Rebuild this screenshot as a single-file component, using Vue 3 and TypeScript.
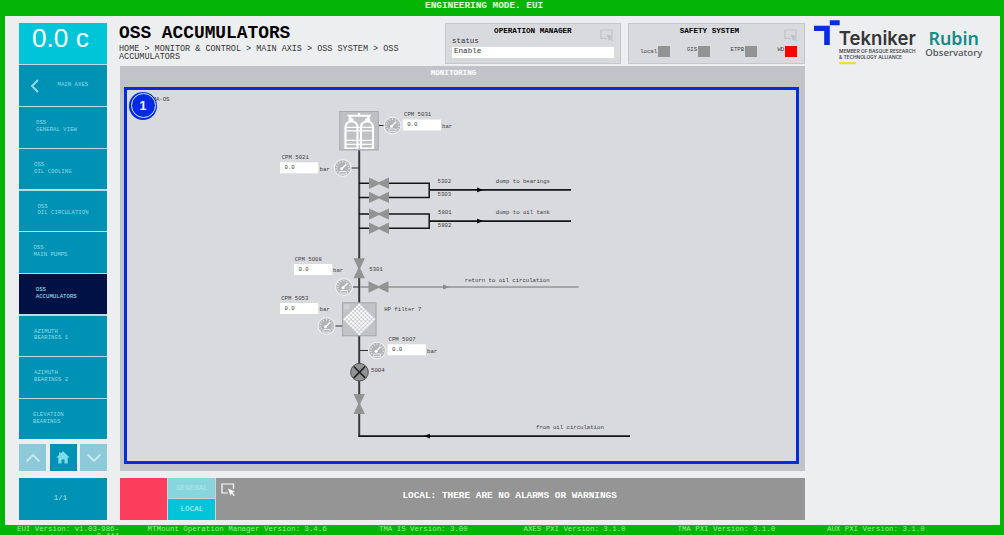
<script setup lang="ts">
interface NavItem { lines: string[]; indent: number; active?: boolean }
interface Sensor { name: string; x: number; y: number; lx: number; ly: number; gx: number; gy: number; bx: number }

const nav: NavItem[] = [
  { lines: ['OSS', 'GENERAL VIEW'], indent: 17 },
  { lines: ['OSS', 'OIL COOLING'], indent: 15 },
  { lines: ['OSS', 'OIL CIRCULATION'], indent: 18.4 },
  { lines: ['OSS', 'MAIN PUMPS'], indent: 14.4 },
  { lines: ['OSS', 'ACCUMULATORS'], indent: 16.8, active: true },
  { lines: ['AZIMUTH', 'BEARINGS 1'], indent: 15 },
  { lines: ['AZIMUTH', 'BEARINGS 2'], indent: 15 },
  { lines: ['ELEVATION', 'BEARINGS'], indent: 14 },
]

const sensors: Sensor[] = [
  { name: 'CPM 5031', x: 402.7, y: 119.5, lx: 404, ly: 116, gx: 392.5, gy: 125.5, bx: 442 },
  { name: 'CPM 5021', x: 280, y: 162.3, lx: 281.7, ly: 158.7, gx: 342.7, gy: 168, bx: 319.5 },
  { name: 'CPM 5008', x: 294, y: 264, lx: 294.7, ly: 260.6, gx: 344, gy: 287, bx: 333 },
  { name: 'CPM 5053', x: 280, y: 303, lx: 281.2, ly: 299.6, gx: 326.5, gy: 326, bx: 319.5 },
  { name: 'CPM 5007', x: 387.5, y: 344.3, lx: 388.5, ly: 341, gx: 377, gy: 350.5, bx: 427 },
]

const labels = [
  { t: '5302', x: 437.6, y: 183.4 },
  { t: '5303', x: 437.6, y: 196.4 },
  { t: '5801', x: 438, y: 214.3 },
  { t: '5802', x: 437.8, y: 227.3 },
  { t: 'dump to bearings', x: 495.8, y: 183.4 },
  { t: 'dump to oil tank', x: 495.8, y: 214.3 },
  { t: '5301', x: 369.3, y: 270.7 },
  { t: 'return to oil circulation', x: 464.8, y: 282 },
  { t: 'HP filter 7', x: 384.2, y: 310.8 },
  { t: '5004', x: 371, y: 371.7 },
  { t: 'from oil circulation', x: 536, y: 429 },
]

const valves = [
  { x: 379, y: 183.2, r: 0 },
  { x: 379, y: 197.4, r: 0 },
  { x: 379, y: 214.1, r: 0 },
  { x: 379, y: 228.3, r: 0 },
  { x: 378.5, y: 287, r: 0 },
  { x: 359.2, y: 268.2, r: 90 },
  { x: 359.2, y: 404, r: 90 },
]

const ticks = [-120, -97, -74, -51, -28, 0, 28, 51, 74, 97, 120]

const dots: { x: number; y: number }[] = []
for (let r = 0; r < 15; r++) {
  const n = 7 - Math.abs(7 - r)
  for (let c = 0; c <= n; c++) dots.push({ x: 359.3 + (c - n / 2) * 4.1, y: 305 + r * 2.05 })
}

const versions = [
  { t: 'MTMount Operation Manager Version: 3.4.6', c: 'v-mount' },
  { t: 'TMA IS Version: 3.00', c: 'v-is' },
  { t: 'AXES PXI Version: 3.1.0', c: 'v-axes' },
  { t: 'TMA PXI Version: 3.1.0', c: 'v-tma' },
  { t: 'AUX PXI Version: 3.1.0', c: 'v-aux' },
]
</script>

<template>
  <div class="app">
    <header class="mode">ENGINEERING MODE. EUI</header>
    <div class="body">
      <aside class="side">
        <div class="temp">0.0 c</div>
        <nav class="menu">
          <div class="item back">
            <svg width="10" height="14" viewBox="0 0 10 14"><path d="M8 1 2 7l6 6" fill="none" stroke="#8fdce8" stroke-width="1.9" /></svg>
            <span>MAIN AXES</span>
          </div>
          <div v-for="(n, i) in nav" :key="i" class="item" :class="{ active: n.active }" :style="{ paddingLeft: n.indent + 'px' }">
            <div><div v-for="l in n.lines" :key="l">{{ l }}</div></div>
          </div>
        </nav>
        <div class="pager">
          <div class="pg dim"><svg width="16" height="10" viewBox="0 0 16 10"><path d="M1.5 8.5 8 2l6.500 6.500" fill="none" stroke="#c9e9ef" stroke-width="1.8" /></svg></div>
          <div class="pg"><svg width="14" height="13" viewBox="0 0 14 13"><path d="M7 .3 13.700 6.500h-2v6H8.500V8.500h-3v4H2.300v-6h-2L3 4V1.500h1.500v1.100z" fill="#7cdcea" /></svg></div>
          <div class="pg dim"><svg width="16" height="10" viewBox="0 0 16 10"><path d="M1.500 1.500 8 8l6.500-6.500" fill="none" stroke="#c9e9ef" stroke-width="1.800" /></svg></div>
        </div>
        <div class="count">1/1</div>
      </aside>

      <main class="main">
        <div class="head">
          <div class="titles">
            <h1>OSS ACCUMULATORS</h1>
            <p>HOME &gt; MONITOR &amp; CONTROL &gt; MAIN AXIS &gt; OSS SYSTEM &gt; OSS ACCUMULATORS</p>
          </div>
          <section class="card manager">
            <h2>OPERATION MANAGER</h2>
            <label>status</label>
            <div class="input">Enable</div>
            <svg class="pick" width="14" height="13" viewBox="0 0 14 13"><path d="M7 9.500H1v-8.500h11v6" fill="none" stroke="#c0c1c5" stroke-width="1.200" /><path d="M6.500 5 13.500 8l-2.500 1 2.200 2.500-1 1L10 10 9 12z" fill="#c0c1c5" /></svg>
          </section>
          <section class="card safety">
            <h2>SAFETY SYSTEM</h2>
            <div class="leds">
              <div class="led first"><span>local</span><i></i></div>
              <div class="led narrow"><span>GIS</span><i></i></div>
              <div class="led"><span>ETPB</span><i></i></div>
              <div class="led narrow"><span>WD</span><i class="red"></i></div>
            </div>
            <svg class="pick" width="14" height="13" viewBox="0 0 14 13"><path d="M7 9.500H1v-8.500h11v6" fill="none" stroke="#c0c1c5" stroke-width="1.200" /><path d="M6.500 5 13.500 8l-2.500 1 2.200 2.500-1 1L10 10 9 12z" fill="#c0c1c5" /></svg>
          </section>
        </div>

        <section class="monitor">
          <h3>MONITORING</h3>
          <div class="frame">
            <svg class="diagram" width="669" height="371" viewBox="127 90 669 371">
              <text x="149.300" y="101.300" textLength="20.200">TMA-OS</text>

              <g fill="none" stroke="#303134" stroke-width="2">
                <path d="M359.200 150v153M359.200 335v101" stroke="#38393c" />
                <path d="M359 183.200h70.200v14.200H359M359 214.100h70.200v14.200H359" stroke-width="1.500" stroke="#141517" />
                <path d="M429.200 189.900H571M429.200 221.100H571M358.300 436.100H630" stroke-width="1.600" stroke="#141517" />
                <path d="M379 125.500h5M351 168h8M352 287h7M335 326h7.500M360 350.500h8" stroke-width="1.200" />
                <path d="M360 287h218.700" stroke="#929395" stroke-width="1.300" />
              </g>
              <path d="M477 187.500l6.500 2.400-6.500 2.400zM477 218.700l6.500 2.400-6.500 2.400zM430 433.700l-6.500 2.400 6.500 2.400z" fill="#090a0b" />
              <path d="M443 284.600l6.500 2.400-6.500 2.400z" fill="#8c8d8f" />

              <g v-for="(v, i) in valves" :key="i" :transform="`translate(${v.x} ${v.y}) rotate(${v.r})`">
                <rect x="-9" y="-2" width="18" height="4" fill="#d9dade" />
                <path d="M-10-5.700 0-1 10-5.700V5.700L0 1-10 5.700z" fill="#929393" />
              </g>

              <g>
                <rect x="339.700" y="111.500" width="38.600" height="38.500" fill="#bfc0c4" stroke="#a8a9ad" />
                <g fill="none" stroke="#fff" stroke-width="2.100">
                  <path d="M350.500 119.500v-1.500l-1.500-2.200h20.500l-1.500 2.200v1.500M359 113v3" />
                  <path d="M345.500 149v-21.500q.3-5.700 6-6.200 5.700.5 6 6.200V149M361 149v-21.500q.3-5.700 6-6.200 5.700.5 6 6.200V149" />
                  <path d="M345 127.300h28M345 130.800h28M345 140.300h28M345 144.300h28" stroke-width="1.300" />
                  <path d="M345.500 148.200h12M361 148.200h12" stroke-width="1.600" />
                </g>
                <path d="M348.500 118.500h5v3h-5zM365 118.500h5v3h-5z" fill="#fff" />
              </g>

              <rect x="342.500" y="302.800" width="33.500" height="33" fill="#c2c3c7" stroke="#a5a6aa" />
              <rect x="344" y="304.300" width="5.500" height="5" fill="#cfd0d3" />
              <circle v-for="(d, i) in dots" :key="'d' + i" :cx="d.x" :cy="d.y" r="1.250" fill="#fff" />

              <circle cx="359.500" cy="372.200" r="8.800" fill="#929393" stroke="#515254" />
              <path d="M353.800 366.500l11.400 11.400M365.200 366.500l-11.400 11.400" stroke="#242528" stroke-width="1.700" />

              <g v-for="s in sensors" :key="s.name">
                <g :transform="`translate(${s.gx} ${s.gy})`">
                  <circle r="8.400" fill="#b2b3b5" stroke="#f1f1f2" stroke-width="1.100" />
                  <path v-for="t in ticks" :key="t" d="M0-7.200V-5.400" stroke="#f4f4f5" stroke-width=".8" :transform="`rotate(${t})`" />
                  <path d="M-1.500 1.500 3.500-3.700" stroke="#fff" stroke-width="1.300" />
                  <circle cx="-1" cy=".8" r="1.500" fill="#fff" />
                  <rect x="-3.700" y="3.500" width="7.400" height="2.700" rx=".8" fill="#b7b8ba" stroke="#f4f4f5" stroke-width=".9" />
                </g>
                <text :x="s.lx" :y="s.ly" textLength="27.200">{{ s.name }}</text>
                <rect :x="s.x" :y="s.y" width="38.300" height="11" fill="#fff" />
                <text :x="s.x + 4.500" :y="s.y + 6.500" textLength="10.200">0.0</text>
                <text :x="s.bx" :y="s.y + 8.300" textLength="10.200">bar</text>
              </g>
              <text v-for="l in labels" :key="l.t" :x="l.x" :y="l.y" :textLength="l.t.length * 3.390">{{ l.t }}</text>
            </svg>
            <div class="badge"><span>1</span></div>
          </div>
        </section>

        <section class="alarm">
          <div class="state"></div>
          <div class="tabs"><div class="tab off">GENERAL</div><div class="tab">LOCAL</div></div>
          <div class="message">
            <svg width="15" height="14" viewBox="0 0 15 14"><path d="M7 10H1V1h11.500v5" fill="none" stroke="#fff" stroke-width="1.200" /><path d="M7 5.500 14 8.500l-2.500 1 2.300 2.500-1 1L10.500 10.500 9.500 12.800z" fill="#fff" /></svg>
            <span>LOCAL: THERE ARE NO ALARMS OR WARNINGS</span>
          </div>
        </section>
      </main>

      <div class="logos">
        <svg width="180" height="48" viewBox="812 18 180 48">
          <path d="M814 25.700h15.800v19.200h-5.600V31H814zM829.800 20.300h9.900v5h-9.900z" fill="#0a2be0" />
          <text class="tek" x="838.800" y="45" textLength="77" lengthAdjust="spacingAndGlyphs">Tekniker</text>
          <text class="member" x="839" y="53.300" textLength="76.500" lengthAdjust="spacingAndGlyphs">MEMBER OF BASQUE RESEARCH</text>
          <text class="member" x="839" y="59" textLength="63" lengthAdjust="spacingAndGlyphs">&amp; TECHNOLOGY ALLIANCE</text>
          <path d="M839.300 62h16.700v2.200h-16.700z" fill="#f7dc2b" />
          <text class="rubin" x="928.500" y="45.300" textLength="50.500" lengthAdjust="spacingAndGlyphs">Rubin</text>
          <text class="obs" x="925.300" y="56.300" textLength="57" lengthAdjust="spacingAndGlyphs">Observatory</text>
        </svg>
      </div>
    </div>
    <footer class="foot">
      <div class="eui">EUI Version: v1.03-986-<br />0.444</div>
      <div v-for="v in versions" :key="v.t" :class="v.c">{{ v.t }}</div>
    </footer>
  </div>
</template>

<style>
body { margin: 0; overflow: hidden; }
</style>

<style scoped>
.app { width: 1004px; height: 535px; box-sizing: border-box; background: #05b505; display: flex; flex-direction: column; overflow: hidden; font-family: "Liberation Mono", monospace; }
h1, h2, h3, p { margin: 0; }
.mode { height: 15.500px; flex: none; color: #e6ffe0; font-weight: 700; font-size: 9.400px; line-height: 11px; padding-left: 425px; white-space: nowrap; }
.body { height: 509.500px; flex: none; box-sizing: border-box; margin: 0 4px 0 5px; padding: 7px 0 0 14px; background: #edeef0; display: flex; }
.side { width: 88px; display: flex; flex-direction: column; }
.temp { height: 41.700px; background: #00c5d9; color: #fff; font: 26.200px/31px "Liberation Sans", sans-serif; padding-left: 13px; box-sizing: border-box; white-space: pre; }
.menu { display: flex; flex-direction: column; gap: 1.300px; padding: 1.300px 0 0; background: #b7dce6; }
.item { height: 40.400px; box-sizing: border-box; background: #0092b5; color: #8bd9e6; font-size: 5.700px; line-height: 6.700px; display: flex; align-items: center; padding-bottom: 1px; white-space: nowrap; }
.item.active { background: #001146; color: #a5e8f4; }
.back { padding: 0 0 0 11px; gap: 17.500px; }
.back span { padding-bottom: 1px; }
.pager { display: flex; justify-content: space-between; margin-top: 4.600px; }
.pg { width: 27px; height: 27.500px; background: #0092b5; display: flex; align-items: center; justify-content: center; }
.dim { background: #8ccada; }
.count { margin-top: 6.500px; height: 42px; background: #0092b5; color: #a3e3ee; font-size: 7.400px; line-height: 41px; text-align: center; padding-right: 5px; box-sizing: border-box; }
.main { width: 684.500px; margin-left: 13px; display: flex; flex-direction: column; }
.head { height: 42px; display: flex; }
.titles { width: 325px; flex: none; margin-left: -1px; }
h1 { font-size: 17.850px; line-height: 20px; height: 22px; white-space: nowrap; margin-top: .500px; }
.titles p { font-size: 8.480px; line-height: 8.500px; width: 290px; color: #333; margin-top: -.500px; }
.card { position: relative; box-sizing: border-box; border: 1px solid #c6c7cb; background: #d9dade; height: 41.500px; }
.card h2 { font-size: 7.620px; line-height: 9px; text-align: center; padding-top: 3.500px; }
.manager { width: 176px; margin-left: 1px; padding: 0 6px; }
.manager label { display: block; font-size: 7.450px; line-height: 9px; color: #333; padding-top: .500px; }
.input { background: #fff; height: 11.500px; font-size: 7.600px; line-height: 9px; color: #333; padding-left: 2px; margin-top: 1px; }
.pick { position: absolute; right: 6px; top: 5px; }
.safety { margin-left: 7.500px; width: 176.500px; }
.safety h2 { padding-right: 14px; }
.leds { display: flex; justify-content: flex-end; padding: 10px 7px 0 0; }
.led { display: flex; flex: none; width: 47px; justify-content: flex-end; font-size: 5.700px; line-height: 8.500px; color: #444; gap: 1px; }
.led.narrow { width: 40px; }
.led.first { width: auto; }
.first span { padding-top: 2px; }
.led i { width: 11.300px; height: 11.300px; background: #929393; flex: none; }
.led i.red { background: #f00; }
.monitor { margin-top: 1.300px; height: 405.700px; background: #c2c3c8; padding: 0 5.500px 0 4px; box-sizing: border-box; }
h3 { height: 21.200px; color: #fff; font-size: 7.600px; line-height: 14px; text-align: center; padding-right: 16px; box-sizing: border-box; }
.frame { position: relative; width: 675px; height: 377px; box-sizing: border-box; border: 3px solid #002be0; background: #d9dade; }
.diagram { display: block; font-size: 5.700px; }
.diagram text { fill: #3d3e41; }
.badge { position: absolute; left: 2px; top: 2px; width: 28px; height: 28px; box-sizing: border-box; border-radius: 50%; background: #002be0; padding: 1.500px; }
.badge span { display: block; height: 25px; box-sizing: border-box; border: 1.200px solid #dfe6ff; border-radius: 50%; color: #fff; font: 700 12.500px/24px "Liberation Sans", sans-serif; text-align: center; }
.alarm { margin-top: 6.500px; height: 42px; display: flex; background: #d0d1d3; }
.state { width: 47px; background: #fb3e5b; }
.tabs { width: 47.500px; margin: 0 .700px; display: flex; flex-direction: column; gap: 1px; }
.tab { height: 20.500px; background: #00c5d9; color: #c9f5f9; font-size: 7.600px; line-height: 20.500px; text-align: center; padding-left: 1px; }
.off { background: #87d6de; color: #b2e5ea; }
.message { flex: 1; background: #959595; display: flex; color: #fff; font-size: 9.420px; font-weight: 700; line-height: 36.500px; padding-left: 5px; white-space: nowrap; }
.message svg { margin-top: 5.500px; flex: none; }
.message span { margin-left: 166.500px; }
.logos { margin-left: 7.500px; margin-top: -4.500px; }
.logos svg { display: block; }
.tek { font: 600 19.300px Inter, sans-serif; fill: #36373a; }
.member { font: 600 5.200px Inter, sans-serif; fill: #4b4c50; }
.rubin { font: 600 18.200px "Noto Sans", sans-serif; fill: #128c88; }
.obs { font: 500 9.600px "Noto Sans", sans-serif; fill: #4a5357; }
.foot { height: 10px; flex: none; display: flex; color: #9cec94; font-size: 7.400px; line-height: 9px; white-space: nowrap; overflow: hidden; }
.foot > div { flex: none; }
.eui { width: 102.500px; padding-left: 16.500px; text-align: right; line-height: 7px; padding-top: .500px; }
.v-mount { padding-left: 28.500px; width: 231.500px; font-size: 7.470px; }
.v-is { width: 144.500px; }
.v-axes { width: 154px; }
.v-tma { width: 149.500px; }
</style>
